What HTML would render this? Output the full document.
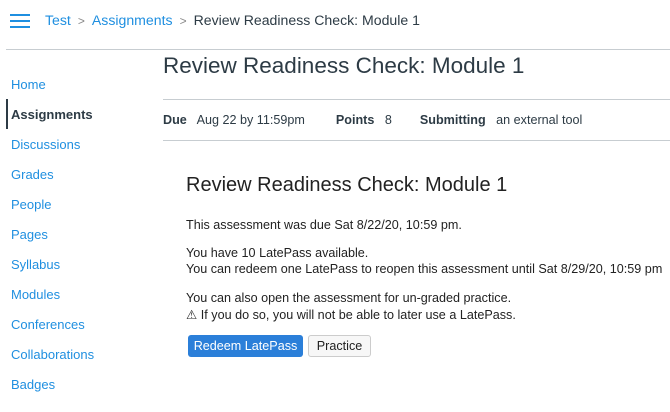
<!DOCTYPE html>
<html><head><style>
*{margin:0;padding:0;box-sizing:border-box}
body{width:670px;height:412px;overflow:hidden;background:#fff;font-family:"Liberation Sans",sans-serif;color:#2d3b45;position:relative}
.a{position:absolute;white-space:nowrap}
.ham{position:absolute;left:10px;width:20px;height:2px;background:#1f8fe0}
.bc{top:12px;font-size:14.1px;color:#2d3b45}
.bc .l{color:#1f8fe0}
.bc .s{color:#888;font-size:12px;margin:0 7px}
.nav{left:11px;font-size:13px;color:#1f8fe0}
.hr{position:absolute;height:1px;background:#c7cdd1}
.t{font-size:12.6px;color:#222}
</style></head><body>
<div class="ham" style="top:14px"></div><div class="ham" style="top:20px"></div><div class="ham" style="top:26px"></div>
<div class="a bc" style="left:45px"><span class="l">Test</span><span class="s">&gt;</span><span class="l">Assignments</span><span class="s">&gt;</span>Review Readiness Check: Module 1</div>
<div class="hr" style="left:6px;right:0;top:49px"></div>
<div class="a nav" style="top:77px">Home</div>
<div style="position:absolute;left:6px;top:99px;width:2px;height:30px;background:#2d3b45"></div>
<div class="a nav" style="top:107px;color:#2d3b45;font-weight:bold">Assignments</div>
<div class="a nav" style="top:137px">Discussions</div>
<div class="a nav" style="top:167px">Grades</div>
<div class="a nav" style="top:197px">People</div>
<div class="a nav" style="top:227px">Pages</div>
<div class="a nav" style="top:257px">Syllabus</div>
<div class="a nav" style="top:287px">Modules</div>
<div class="a nav" style="top:317px">Conferences</div>
<div class="a nav" style="top:347px">Collaborations</div>
<div class="a nav" style="top:377px">Badges</div>
<div class="a" style="left:163px;top:53px;font-size:22.5px;color:#2d3b45">Review Readiness Check: Module 1</div>
<div class="hr" style="left:163px;right:0;top:99px"></div>
<div class="a" style="left:163px;top:113px;font-size:12.6px"><b>Due</b>&nbsp;&nbsp; Aug 22 by 11:59pm<span style="display:inline-block;width:31px"></span><b>Points</b>&nbsp;&nbsp; 8<span style="display:inline-block;width:28px"></span><b>Submitting</b>&nbsp;&nbsp; an external tool</div>
<div class="hr" style="left:163px;right:0;top:140px"></div>
<div class="a" style="left:186px;top:174px;font-size:20px;color:#222">Review Readiness Check: Module 1</div>
<div class="a t" style="left:186px;top:218px">This assessment was due Sat 8/22/20, 10:59 pm.</div>
<div class="a t" style="left:186px;top:246px">You have 10 LatePass available.</div>
<div class="a t" style="left:186px;top:262px">You can redeem one LatePass to reopen this assessment until Sat 8/29/20, 10:59 pm</div>
<div class="a t" style="left:186px;top:291px">You can also open the assessment for un-graded practice.</div>
<div class="a t" style="left:186px;top:307px">⚠ If you do so, you will not be able to later use a LatePass.</div>
<div class="a" style="left:188px;top:335px;width:115px;height:22px;background:#2b7fd9;border-radius:3px;color:#fff;font-size:12.6px;text-align:center;line-height:22px">Redeem LatePass</div>
<div class="a" style="left:308px;top:335px;width:63px;height:22px;background:#f7f7f7;border:1px solid #ccc;border-radius:3px;color:#222;font-size:12.6px;text-align:center;line-height:20px">Practice</div>
</body></html>
